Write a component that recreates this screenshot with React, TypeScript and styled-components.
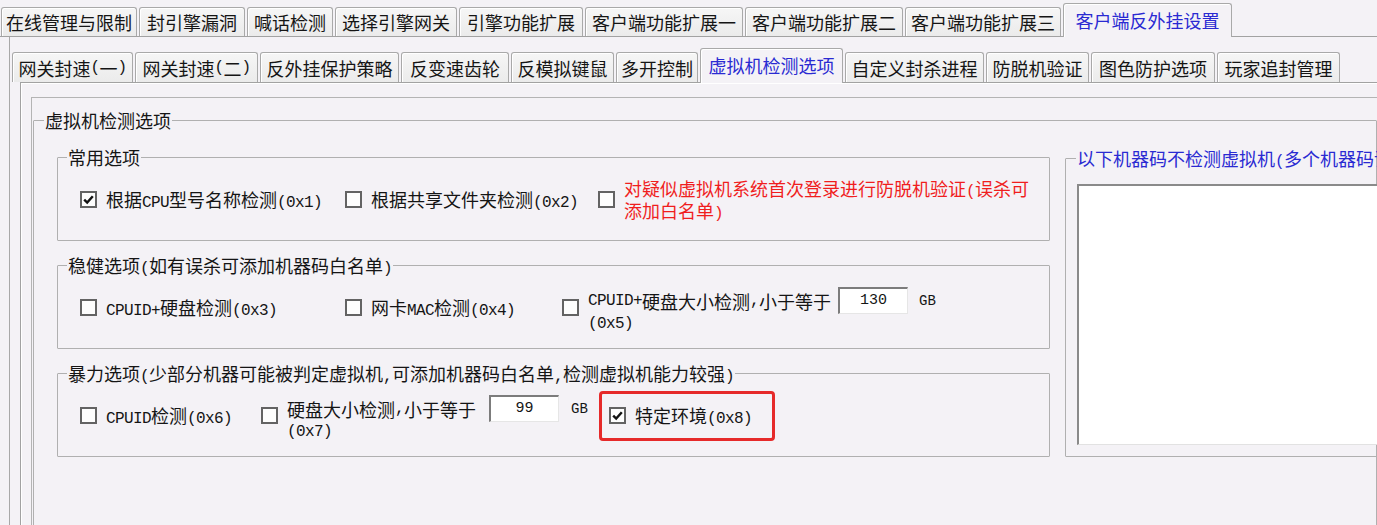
import React from "react";
import styled, { createGlobalStyle } from "styled-components";

const PAGE_BG = "#f4f2f6";
const BLUE = "#2a2ad2";
const RED = "#f01e1e";

const GlobalStyle = createGlobalStyle`
  html, body { margin: 0; padding: 0; background: ${PAGE_BG}; }
  body {
    font-family: "Noto Sans CJK SC", "Noto Sans", sans-serif;
    font-size: 18px;
    color: #151515;
  }
  * { box-sizing: border-box; }
`;

const Root = styled.div`
  width: 1377px;
  height: 525px;
  overflow: hidden;
  background: ${PAGE_BG};
  display: flex;
  flex-direction: column;
`;

const Mono = styled.span`
  font-family: "Liberation Mono", "DejaVu Sans Mono", monospace;
  font-size: 16px;
  letter-spacing: -0.6px;
  line-height: 1;
`;

const mix = (text: string) =>
  text
    .split(/([\x20-\x7E]+)/)
    .filter(Boolean)
    .map((s, i) =>
      /^[\x20-\x7E]+$/.test(s) ? (
        <Mono key={i}>{s}</Mono>
      ) : (
        <React.Fragment key={i}>{s}</React.Fragment>
      )
    );

/* ---------- tabs ---------- */
const TabStrip = styled.div<{ $top: number; $left: number }>`
  display: flex;
  align-items: flex-end;
  gap: 2px;
  padding: ${(p) => p.$top}px 0 0 ${(p) => p.$left}px;
  flex: 0 0 auto;
`;

const Tab = styled.div<{ $w: number; $h: number; $active?: boolean }>`
  position: relative;
  z-index: ${(p) => (p.$active ? 2 : 1)};
  flex: 0 0 auto;
  width: ${(p) => p.$w}px;
  height: ${(p) => (p.$active ? p.$h + 5 : p.$h)}px;
  margin-bottom: ${(p) => (p.$active ? "-1px" : "0")};
  display: flex;
  align-items: center;
  justify-content: center;
  padding-bottom: ${(p) => (p.$active ? "2px" : "0")};
  border: 1px solid #a9a9a9;
  border-bottom: none;
  border-radius: 3px 3px 0 0;
  background: ${(p) =>
    p.$active ? PAGE_BG : "linear-gradient(#f6f6f6, #ebebeb)"};
  box-shadow: inset 1px 1px 0 #ffffff;
  color: ${(p) => (p.$active ? BLUE : "#151515")};
  line-height: 20px;
  white-space: nowrap;
`;

/* ---------- panels ---------- */
const Page1 = styled.div`
  flex: 1 1 auto;
  border-top: 1px solid #a2a2a2;
  padding-left: 9px;
  display: flex;
  flex-direction: column;
`;

const Page1Body = styled.div`
  flex: 1 1 auto;
  border-left: 1px solid #a8a8a8;
  display: flex;
  flex-direction: column;
`;

const Page2 = styled.div`
  flex: 1 1 auto;
  margin-left: 10px;
  border-top: 1px solid #a2a2a2;
  border-left: 1px solid #a2a2a2;
  box-shadow: inset 1px 1px 0 #ffffff;
  display: flex;
  flex-direction: column;
`;

const Frame = styled.div`
  flex: 1 1 auto;
  margin: 14px 0 0 10px;
  border-top: 1px solid #b4b4b4;
  border-left: 1px solid #b4b4b4;
  display: flex;
  flex-direction: column;
`;

/* ---------- group boxes ---------- */
const Group = styled.fieldset`
  margin: 0;
  padding: 0;
  min-width: 0;
  border: 1px solid #b0b0b0;
  border-radius: 1px;
`;

const Legend = styled.legend<{ $gap: number; $color?: string }>`
  margin-left: ${(p) => p.$gap}px;
  padding: 0 1px;
  height: 20px;
  line-height: 20px;
  font-size: 18px;
  white-space: nowrap;
  color: ${(p) => p.$color || "#151515"};
`;

const GroupBody = styled.div<{ $pad: string }>`
  padding: ${(p) => p.$pad};
`;

const OuterGroup = styled(Group)`
  margin: 12px 0 0 1px;
  min-height: 440px;
`;

const Columns = styled.div`
  display: flex;
  align-items: flex-start;
  gap: 15px;
`;

const LeftColumn = styled.div`
  flex: 0 0 993px;
  display: flex;
  flex-direction: column;
  gap: 14px;
`;

const SideGroup = styled(Group)`
  flex: 0 0 420px;
  margin-top: 1px;
`;

const MachineList = styled.div`
  height: 261px;
  background: #ffffff;
  border-top: 2px solid #8a8a8a;
  border-left: 2px solid #8a8a8a;
  border-right: 1px solid #e2e2e2;
  border-bottom: 1px solid #e2e2e2;
`;

/* ---------- rows / checkboxes ---------- */
const OptionRow = styled.div`
  display: flex;
  align-items: center;
  height: 41px;
`;

const CheckItem = styled.div<{ $w?: number }>`
  flex: 0 0 ${(p) => (p.$w ? `${p.$w}px` : "auto")};
  display: flex;
  align-items: center;
  gap: 9px;
`;

const Box = styled.span`
  flex: 0 0 auto;
  width: 17px;
  height: 17px;
  border: 2px solid #636363;
  background: #fdfdfd;
  display: inline-flex;
  align-items: center;
  justify-content: center;
`;

const Label = styled.span<{ $color?: string; $lh?: number }>`
  display: block;
  color: ${(p) => p.$color || "#151515"};
  line-height: ${(p) => p.$lh || 20}px;
  white-space: nowrap;
`;

const LabelStack = styled.div`
  display: flex;
  flex-direction: column;
`;

const LabelLine = styled.div`
  display: flex;
  align-items: center;
  height: 27px;
  white-space: nowrap;
  line-height: 20px;
`;

const SubLine = styled.div`
  line-height: 12px;
  height: 14px;
`;

const NumField = styled.div<{ $gap: number }>`
  margin-left: ${(p) => p.$gap}px;
  width: 70px;
  height: 27px;
  background: #ffffff;
  border-top: 2px solid #7c7c7c;
  border-left: 2px solid #7c7c7c;
  border-right: 1px solid #e6e6e6;
  border-bottom: 1px solid #e6e6e6;
  display: flex;
  align-items: center;
  justify-content: center;
  font-family: "Liberation Mono", monospace;
  font-size: 15px;
  color: #151515;
`;

const Unit = styled.span<{ $gap: number }>`
  margin-left: ${(p) => p.$gap}px;
  font-family: "Liberation Mono", monospace;
  font-size: 14px;
  line-height: 1;
`;

const Highlight = styled.div`
  flex: 0 0 176px;
  height: 50px;
  margin: -5px 0;
  border: 3px solid #e62a2a;
  border-radius: 4px;
  padding-left: 7px;
  display: flex;
  align-items: center;
`;

const Check = ({ checked }: { checked?: boolean }) => (
  <Box>
    {checked && (
      <svg width="13" height="13" viewBox="0 0 13 13">
        <polyline
          points="2.2,6.6 5.2,9.6 10.8,3.2"
          fill="none"
          stroke="#111"
          strokeWidth="2.4"
        />
      </svg>
    )}
  </Box>
);

const level1: [string, number, boolean?][] = [
  ["在线管理与限制", 136],
  ["封引擎漏洞", 106],
  ["喊话检测", 86],
  ["选择引擎网关", 122],
  ["引擎功能扩展", 124],
  ["客户端功能扩展一", 158],
  ["客户端功能扩展二", 158],
  ["客户端功能扩展三", 156],
  ["客户端反外挂设置", 169, true],
];

const level2: [string, number, boolean?][] = [
  ["网关封速(一)", 121],
  ["网关封速(二)", 123],
  ["反外挂保护策略", 139],
  ["反变速齿轮", 108],
  ["反模拟键鼠", 103],
  ["多开控制", 82],
  ["虚拟机检测选项", 143, true],
  ["自定义封杀进程", 139],
  ["防脱机验证", 103],
  ["图色防护选项", 124],
  ["玩家追封管理", 123],
];

const OPTION_PAD = "12px 10px 20px 22px";

export default function App() {
  return (
    <Root>
      <GlobalStyle />
      <TabStrip $top={3} $left={1}>
        {level1.map(([t, w, a]) => (
          <Tab key={t} $w={w} $h={29} $active={a}>
            {mix(t)}
          </Tab>
        ))}
      </TabStrip>
      <Page1>
        <Page1Body>
          <TabStrip $top={11} $left={2}>
            {level2.map(([t, w, a]) => (
              <Tab key={t} $w={w} $h={30} $active={a}>
                {mix(t)}
              </Tab>
            ))}
          </TabStrip>
          <Page2>
            <Frame>
              <OuterGroup>
                <Legend $gap={10}>虚拟机检测选项</Legend>
                <GroupBody $pad="17px 20px 0 23px">
                  <Columns>
                    <LeftColumn>
                      <Group>
                        <Legend $gap={9}>常用选项</Legend>
                        <GroupBody $pad={OPTION_PAD}>
                          <OptionRow>
                            <CheckItem $w={265}>
                              <Check checked />
                              <Label>{mix("根据CPU型号名称检测(0x1)")}</Label>
                            </CheckItem>
                            <CheckItem $w={253}>
                              <Check />
                              <Label>{mix("根据共享文件夹检测(0x2)")}</Label>
                            </CheckItem>
                            <CheckItem>
                              <Check />
                              <Label $color={RED} $lh={20}>
                                {mix("对疑似虚拟机系统首次登录进行防脱机验证(误杀可")}
                                <br />
                                {mix("添加白名单)")}
                              </Label>
                            </CheckItem>
                          </OptionRow>
                        </GroupBody>
                      </Group>

                      <Group>
                        <Legend $gap={9}>{mix("稳健选项(如有误杀可添加机器码白名单)")}</Legend>
                        <GroupBody $pad={OPTION_PAD}>
                          <OptionRow>
                            <CheckItem $w={265}>
                              <Check />
                              <Label>{mix("CPUID+硬盘检测(0x3)")}</Label>
                            </CheckItem>
                            <CheckItem $w={217}>
                              <Check />
                              <Label>{mix("网卡MAC检测(0x4)")}</Label>
                            </CheckItem>
                            <CheckItem>
                              <Check />
                              <LabelStack>
                                <LabelLine>
                                  {mix("CPUID+硬盘大小检测,小于等于")}
                                  <NumField $gap={7}>130</NumField>
                                  <Unit $gap={11}>GB</Unit>
                                </LabelLine>
                                <SubLine>
                                  <Mono>(0x5)</Mono>
                                </SubLine>
                              </LabelStack>
                            </CheckItem>
                          </OptionRow>
                        </GroupBody>
                      </Group>

                      <Group>
                        <Legend $gap={9}>
                          {mix("暴力选项(少部分机器可能被判定虚拟机,可添加机器码白名单,检测虚拟机能力较强)")}
                        </Legend>
                        <GroupBody $pad={OPTION_PAD}>
                          <OptionRow>
                            <CheckItem $w={181}>
                              <Check />
                              <Label>{mix("CPUID检测(0x6)")}</Label>
                            </CheckItem>
                            <CheckItem $w={338}>
                              <Check />
                              <LabelStack>
                                <LabelLine>
                                  {mix("硬盘大小检测,小于等于")}
                                  <NumField $gap={13}>99</NumField>
                                  <Unit $gap={12}>GB</Unit>
                                </LabelLine>
                                <SubLine>
                                  <Mono>(0x7)</Mono>
                                </SubLine>
                              </LabelStack>
                            </CheckItem>
                            <Highlight>
                              <CheckItem>
                                <Check checked />
                                <Label>{mix("特定环境(0x8)")}</Label>
                              </CheckItem>
                            </Highlight>
                          </OptionRow>
                        </GroupBody>
                      </Group>
                    </LeftColumn>

                    <SideGroup>
                      <Legend $gap={10} $color={BLUE}>
                        {mix("以下机器码不检测虚拟机(多个机器码请用换行分隔)")}
                      </Legend>
                      <GroupBody $pad="16px 0 11px 11px">
                        <MachineList />
                      </GroupBody>
                    </SideGroup>
                  </Columns>
                </GroupBody>
              </OuterGroup>
            </Frame>
          </Page2>
        </Page1Body>
      </Page1>
    </Root>
  );
}
